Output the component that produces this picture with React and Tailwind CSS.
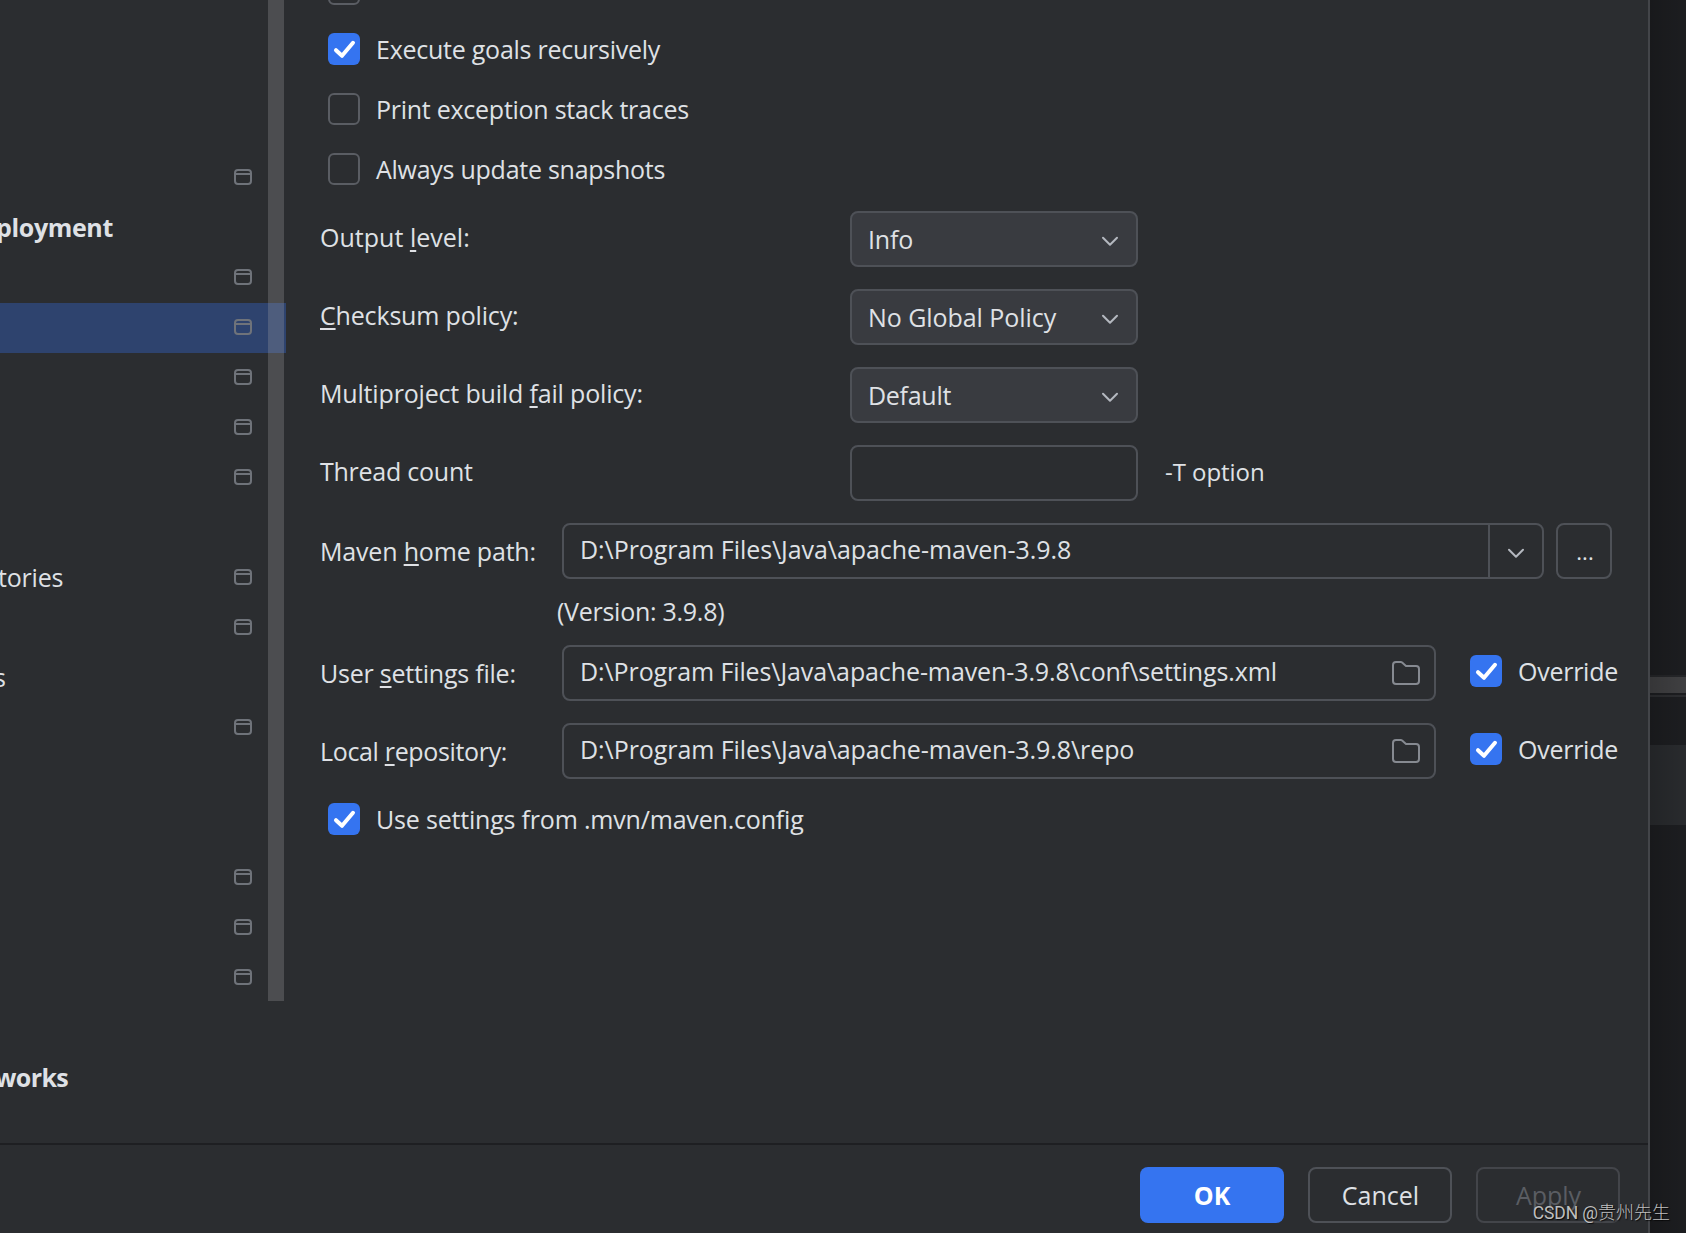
import clsx from "clsx";

const TREE_ROWS = [
  {}, {}, {},
  { icon: true },
  { label: "ployment", bold: true, className: "-ml-1 tracking-[-0.35px]" },
  { icon: true },
  { icon: true, selected: true },
  { icon: true },
  { icon: true },
  { icon: true },
  {},
  { icon: true, label: "tories", className: "-ml-0.5 tracking-[-0.2px]" },
  { icon: true },
  { label: "s", className: "-ml-1.5" },
  { icon: true },
  {}, {},
  { icon: true },
  { icon: true },
  { icon: true },
  {},
  { label: "works", bold: true, className: "-ml-[5px] tracking-[-0.6px]" },
];

function ProjectIcon() {
  return (
    <svg width="18" height="16" viewBox="0 0 18 16" fill="none" stroke="#6f737a" strokeWidth="2">
      <rect x="1" y="1" width="16" height="14" rx="3" />
      <path d="M1 5h16" />
    </svg>
  );
}

function ChevronIcon() {
  return (
    <svg width="18" height="18" viewBox="0 0 18 18" fill="none" stroke="#b4b8bf" strokeWidth="2" strokeLinecap="round" strokeLinejoin="round">
      <path d="M2 7.8l7 7 7-7" />
    </svg>
  );
}

function FolderIcon() {
  return (
    <svg width="28" height="24" viewBox="0 0 28 24" fill="none" stroke="#868a91" strokeWidth="2" strokeLinejoin="round">
      <path d="M4 1h4.8a2 2 0 0 1 1.3.5L14 5h10a3 3 0 0 1 3 3v12a3 3 0 0 1-3 3H4a3 3 0 0 1-3-3V4a3 3 0 0 1 3-3z" />
    </svg>
  );
}

function Checkbox({ checked, label, className }) {
  return (
    <label className={clsx("flex items-center gap-4 whitespace-nowrap", className)}>
      <span
        className={clsx(
          "size-8 shrink-0 rounded-[6px]",
          checked ? "bg-[#3574f0]" : "border-2 border-[#5a5d63]"
        )}
      >
        {checked && (
          <svg width="32" height="32" viewBox="0 0 32 32" fill="none" stroke="white" strokeWidth="4" strokeLinecap="round" strokeLinejoin="round">
            <path d="M8 17.2l6 5.6L25 9.8" />
          </svg>
        )}
      </span>
      <span>{label}</span>
    </label>
  );
}

function Mnemonic({ children }) {
  return <span className="underline decoration-2 underline-offset-[3px] [text-decoration-skip-ink:none]">{children}</span>;
}

function FormRow({ label, labelClass, children }) {
  return (
    <div className="flex h-[78px] items-center">
      <div className={clsx("shrink-0 whitespace-nowrap", labelClass)}>{label}</div>
      {children}
    </div>
  );
}

function Select({ value, className }) {
  return (
    <div className="flex h-14 w-[288px] items-center justify-between rounded-lg border-2 border-[#4e5157] bg-[#393b40] pl-4 pr-[17px]">
      <span className={className}>{value}</span>
      <ChevronIcon />
    </div>
  );
}

function PathField({ value, className }) {
  return (
    <div className="flex h-14 w-[874px] items-center justify-between rounded-lg border-2 border-[#4e5157] pl-4 pr-[14px]">
      <span className={clsx("pb-1", className)}>{value}</span>
      <FolderIcon />
    </div>
  );
}

function SettingsTree() {
  return (
    <div className="relative h-full w-[286px] shrink-0 overflow-hidden pt-[3px]">
      {TREE_ROWS.map((row, i) => (
        <div key={i} className={clsx("flex h-[50px] items-center pr-[34px]", row.selected && "bg-[#2e436e]")}>
          <span className={clsx("pb-[3px]", row.bold && "font-bold", row.className)}>{row.label}</span>
          {row.icon && (
            <span className="ml-auto pb-0.5">
              <ProjectIcon />
            </span>
          )}
        </div>
      ))}
      <div className="absolute left-[268px] top-0 h-[1001px] w-4 bg-[#a6a6a6]/27" />
    </div>
  );
}

function MavenForm() {
  return (
    <div className="flex flex-1 flex-col overflow-hidden">
      <div className="flex h-[19px] flex-col justify-end pb-[14px] pl-[42px]">
        <Checkbox />
      </div>
      <div className="pb-px pl-[42px]">
        <Checkbox checked label="Execute goals recursively" className="h-[60px] tracking-[-0.25px]" />
        <Checkbox label="Print exception stack traces" className="h-[60px] tracking-[-0.26px]" />
        <Checkbox label="Always update snapshots" className="h-[60px] tracking-[-0.26px]" />
      </div>

      <div className="pl-[34px]">
        <FormRow labelClass="w-[530px] pb-1 tracking-[0.02px]" label={<>Output <Mnemonic>l</Mnemonic>evel:</>}>
          <Select value="Info" className="tracking-[-0.15px]" />
        </FormRow>
        <FormRow labelClass="w-[530px] pb-1 tracking-[-0.17px]" label={<><Mnemonic>C</Mnemonic>hecksum policy:</>}>
          <Select value="No Global Policy" className="tracking-[-0.06px]" />
        </FormRow>
        <FormRow labelClass="w-[530px] pb-1 tracking-[-0.17px]" label={<>Multiproject build <Mnemonic>f</Mnemonic>ail policy:</>}>
          <Select value="Default" className="tracking-[-0.28px]" />
        </FormRow>
        <FormRow labelClass="w-[530px] pb-1 tracking-[-0.25px]" label="Thread count">
          <div className="h-14 w-[288px] rounded-lg border-2 border-[#4e5157]" />
          <span className="pb-[3px] pl-[27px] text-2xl tracking-[-0.05px]">-T option</span>
        </FormRow>

        <FormRow labelClass="w-[242px] tracking-[-0.18px]" label={<>Maven <Mnemonic>h</Mnemonic>ome path:</>}>
          <div className="flex h-14 w-[982px] rounded-lg border-2 border-[#4e5157]">
            <span className="flex flex-1 items-center pb-1 pl-4 tracking-[-0.06px]">
              D:\Program Files\Java\apache-maven-3.9.8
            </span>
            <span className="flex w-[54px] items-center justify-center border-l-2 border-[#4e5157]">
              <ChevronIcon />
            </span>
          </div>
          <button className="ml-3 size-14 rounded-lg border-2 border-[#4e5157] pl-0.5 text-[22px]">...</button>
        </FormRow>
        <div className="-mt-px flex h-[45px] items-center pb-0.5 pl-[237px] tracking-[-0.27px]">(Version: 3.9.8)</div>
        <FormRow labelClass="w-[242px] tracking-[-0.22px]" label={<>User <Mnemonic>s</Mnemonic>ettings file:</>}>
          <PathField value="D:\Program Files\Java\apache-maven-3.9.8\conf\settings.xml" className="tracking-[-0.1px]" />
          <Checkbox checked label="Override" className="pb-1 pl-[34px] tracking-[-0.26px]" />
        </FormRow>
        <FormRow labelClass="w-[242px] tracking-[-0.34px]" label={<>Local <Mnemonic>r</Mnemonic>epository:</>}>
          <PathField value="D:\Program Files\Java\apache-maven-3.9.8\repo" className="tracking-[-0.07px]" />
          <Checkbox checked label="Override" className="pb-1 pl-[34px] tracking-[-0.26px]" />
        </FormRow>
      </div>

      <div className="pl-[42px]">
        <Checkbox checked label="Use settings from .mvn/maven.config" className="h-[58px] tracking-[-0.19px]" />
      </div>
    </div>
  );
}

function Backdrop() {
  return (
    <div className="relative flex flex-1 flex-col bg-[#1e1f22]">
      <div className="h-[675px]" />
      <div className="h-0.5 bg-[#27282b]" />
      <div className="h-4 bg-[#434345]" />
      <div className="h-0.5 bg-[#1e1f22]" />
      <div className="h-0.5 bg-[#2f3033]" />
      <div className="h-12" />
      <div className="h-20 bg-[#2b2d30]" />
      <div className="absolute inset-0 bg-linear-to-r from-black/20 to-black/5" />
    </div>
  );
}

export default function App() {
  return (
    <div className="relative flex h-[1233px] w-[1686px] overflow-hidden bg-[#1e1f22] font-['Open_Sans','Noto_Sans',sans-serif] text-[25px] leading-[34px] text-[#dfe1e5]">
      <div className="flex w-[1650px] shrink-0 flex-col border-r-2 border-[#434549] bg-[#2b2d30]">
        <div className="flex h-[1143px] shrink-0">
          <SettingsTree />
          <MavenForm />
        </div>
        <div className="flex flex-1 items-center justify-end gap-6 border-t-2 border-[#1e1f22] pr-7 pt-3">
          <button className="h-14 w-36 rounded-lg bg-[#3574f0] font-bold text-white">OK</button>
          <button className="h-14 w-36 rounded-lg border-2 border-[#4e5157] pl-px">Cancel</button>
          <button className="h-14 w-36 rounded-lg border-2 border-[#43454a] pl-px text-[#5a5d63]">Apply</button>
        </div>
      </div>
      <Backdrop />
      <div className="absolute bottom-2 right-4 flex items-baseline whitespace-nowrap font-['Roboto','Noto_Sans_CJK_SC',sans-serif] text-[17.5px] leading-6 text-[#bfbfbf] [text-shadow:1px_1px_1px_rgba(0,0,0,0.8)]">
        <span className="tracking-[-0.1px]">CSDN @</span>
        <span className="font-['Noto_Sans_CJK_SC',sans-serif] text-lg font-light leading-6">贵州先生</span>
      </div>
    </div>
  );
}
